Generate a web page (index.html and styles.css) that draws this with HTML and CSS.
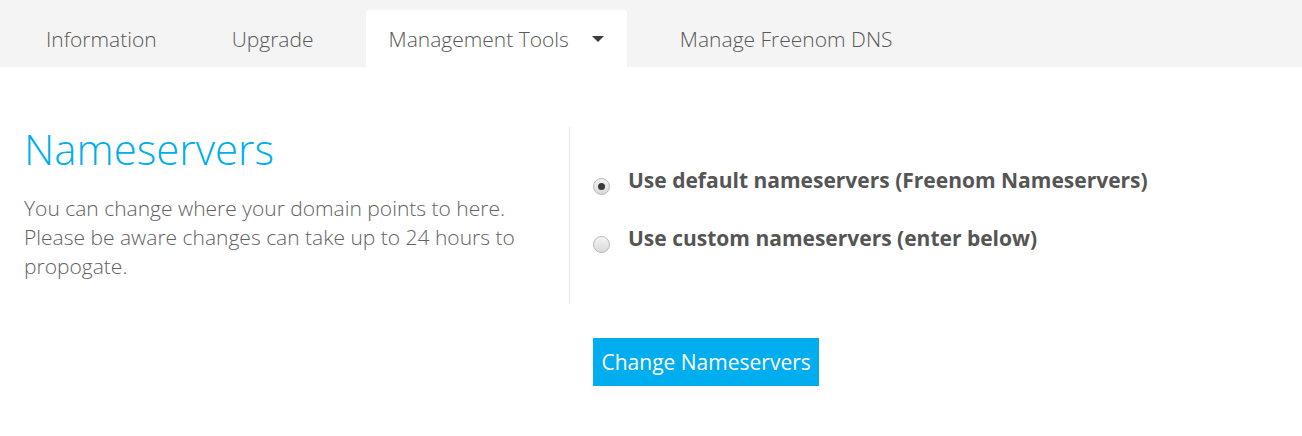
FILE: index.html
```html
<!DOCTYPE html>
<html lang="en">
<head>
<meta charset="utf-8">
<title>Nameservers</title>
<link rel="stylesheet" href="styles.css">
</head>
<body>
<nav class="tabs">
  <a class="tab">Information</a>
  <a class="tab">Upgrade</a>
  <a class="tab tab-active">Management Tools <span class="caret"></span></a>
  <a class="tab">Manage Freenom DNS</a>
</nav>
<main class="ns">
  <section class="ns-info">
    <h1 class="ns-title">Nameservers</h1>
    <p class="ns-text">You can change where your domain points to here. Please be aware changes can take up to 24 hours to propogate.</p>
  </section>
  <section class="ns-options">
    <label class="opt"><input type="radio" name="ns" class="radio" checked><span>Use default nameservers (Freenom Nameservers)</span></label>
    <label class="opt"><input type="radio" name="ns" class="radio"><span>Use custom nameservers (enter below)</span></label>
  </section>
  <div class="ns-actions">
    <button class="btn">Change Nameservers</button>
  </div>
</main>
</body>
</html>
```
FILE: styles.css
```css
html, body {
  margin: 0;
  padding: 0;
  background: #ffffff;
  font-family: "Open Sans", "Liberation Sans", sans-serif;
}

.tabs {
  display: flex;
  align-items: flex-end;
  height: 67px;
  box-sizing: border-box;
  padding: 10px 0 0 23px;
  background: #f4f4f4;
}

.tab {
  display: flex;
  align-items: center;
  height: 57px;
  padding: 1px 23px 0;
  box-sizing: border-box;
  margin-right: 29px;
  font-size: 21px;
  font-weight: 300;
  color: #585858;
  white-space: nowrap;
}

.tab-active {
  background: #ffffff;
  border-radius: 4px 4px 0 0;
  padding-right: 23px;
  margin-right: 30px;
}

.caret {
  display: inline-block;
  width: 0;
  height: 0;
  margin-left: 23px;
  border-left: 6px solid transparent;
  border-right: 6px solid transparent;
  border-top: 6px solid #3c3c3c;
}

.ns {
  display: grid;
  grid-template-columns: 570px 1fr;
  margin-top: 60px;
}

.ns-info {
  padding-left: 24px;
  padding-right: 24px;
  border-right: 1px solid #e6e6e6;
  height: 177px;
}

.ns-title {
  margin: 0;
  font-size: 42px;
  line-height: 44px;
  font-weight: 300;
  color: #00aeef;
}

.ns-text {
  margin: 23px 0 0;
  font-size: 21px;
  line-height: 29px;
  font-weight: 300;
  color: #626262;
}

.ns-options {
  padding: 41px 0 0 23px;
  display: flex;
  flex-direction: column;
  gap: 34px;
}

.opt {
  display: flex;
  align-items: flex-start;
  height: 24px;
  line-height: 24px;
  font-size: 21px;
  font-weight: 700;
  color: #555555;
  white-space: nowrap;
}

.radio {
  appearance: none;
  -webkit-appearance: none;
  flex: none;
  width: 17px;
  height: 17px;
  margin: 10px 18px 0 0;
  border: 1px solid #b8b8b8;
  border-radius: 50%;
  background: linear-gradient(#f3f3f3, #d9d9d9);
  box-sizing: border-box;
  position: relative;
}

.radio:checked::after {
  content: "";
  position: absolute;
  left: 4px;
  top: 4px;
  width: 7px;
  height: 7px;
  border-radius: 50%;
  background: #3a3a3a;
}

.ns-actions {
  grid-column: 2;
  padding: 34px 0 0 23px;
}

.btn {
  border: 0;
  margin: 0;
  height: 48px;
  padding: 0 8.5px;
  background: #00adef;
  color: #ffffff;
  font-family: "Open Sans", "Liberation Sans", sans-serif;
  font-size: 21px;
  font-weight: 400;
}
```
